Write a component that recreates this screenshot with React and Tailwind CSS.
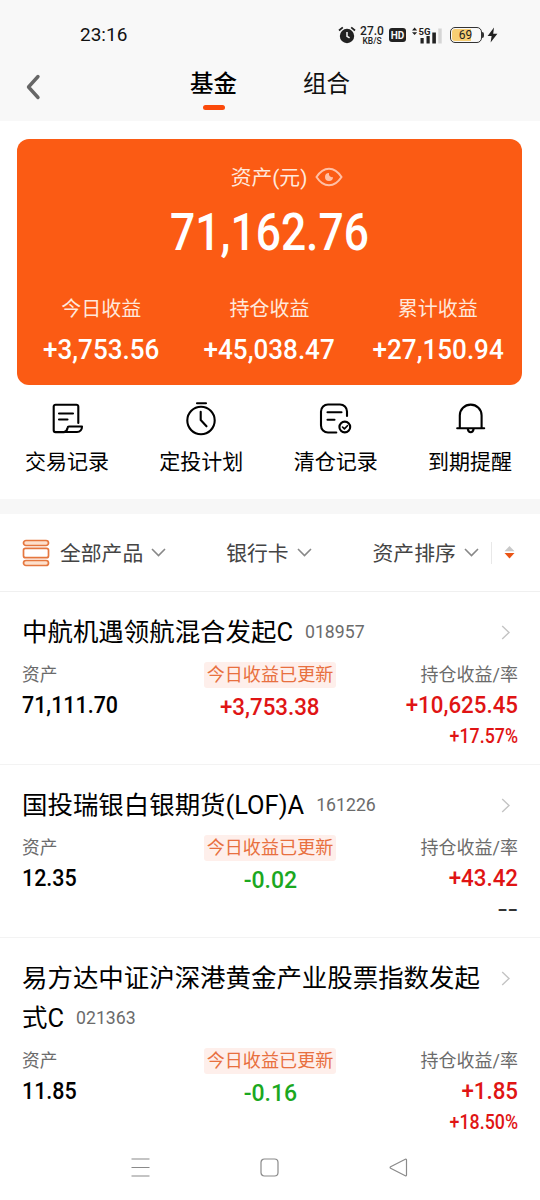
import { useState } from 'react'
import clsx from 'clsx'

const summary = [
    { label: '今日收益', value: '+3,753.56' },
    { label: '持仓收益', value: '+45,038.47' },
    { label: '累计收益', value: '+27,150.94' },
]

const funds = [
    {
        name: '中航机遇领航混合发起C',
        code: '018957',
        asset: '71,111.70',
        today: '+3,753.38',
        profit: '+10,625.45',
        rate: '+17.57%',
    },
    {
        name: '国投瑞银白银期货(LOF)A',
        code: '161226',
        asset: '12.35',
        today: '-0.02',
        profit: '+43.42',
        rate: '--',
    },
    {
        name: '易方达中证沪深港黄金产业股票指数发起式C',
        code: '021363',
        asset: '11.85',
        today: '-0.16',
        profit: '+1.85',
        rate: '+18.50%',
    },
]

const tone = (v) => {
    if (v === '--') return 'text-[#333]'
    return v[0] === '-' ? 'text-[#1ba81f]' : 'text-[#e01414]'
}

function Chevron(){
    return(
        <svg className="ml-2" width="15" height="9" viewBox="0 0 15 9" fill="none" stroke="#888" strokeWidth="1.6">
            <path d="M1 1l6.5 6.5L14 1" />
        </svg>
    )
}

function StatusBar(){
    return(
        <div className="flex h-[60px] items-center justify-between pl-[80px] pr-[42px] pt-[10px]">
            <div className="text-[19px] leading-6 text-[#111]">23:16</div>
            <div className="flex items-center text-[#222]">
                <svg width="18" height="18" viewBox="0 0 18 18">
                    <circle cx="9" cy="10" r="7.2" fill="#222" />
                    <path d="M1 4.5L4.8 1.4M17 4.5l-3.8-3.1" stroke="#222" strokeWidth="1.8" />
                    <path d="M9 6v4.3l2.6 1.6" stroke="#f8f8f8" strokeWidth="1.5" fill="none" />
                </svg>
                <div className="ml-[4px] flex w-[24px] flex-col items-center font-medium">
                    <span className="text-[12px] leading-[12px]">27.0</span>
                    <span className="text-[8.5px] leading-[9px]">KB/S</span>
                </div>
                <div className="ml-[5px] flex h-[14px] w-[17px] items-center justify-center rounded-[3px] bg-[#222] text-[10px] font-bold text-[#f8f8f8]">HD</div>
                <div className="relative ml-[6px] h-[17px] w-[30px]">
                    <svg width="30" height="17" viewBox="0 0 30 17" fill="#222">
                        <path d="M0 3.4L2.6 .6l2.6 2.8zM0 5.2h5.2L2.6 8z" />
                        <rect x="8.5" y="11" width="3.2" height="5.5" />
                        <rect x="14.5" y="9" width="3.2" height="7.5" />
                        <rect x="20.3" y="5.5" width="3.6" height="11" />
                        <rect x="26.3" y="1.5" width="3.4" height="15" fill="#d5d5d5" />
                    </svg>
                    <span className="absolute left-[6.5px] top-0 text-[9.5px] font-bold leading-[9px]">5G</span>
                </div>
                <div className="ml-[8px] flex h-[16px] w-[32px] rounded-[5px] border-[1.5px] border-[#333] p-[1px]">
                    <div className="w-[19px] rounded-l-[3px] bg-[#f7ce73]" />
                    <span className="-ml-[19px] w-[27px] text-center text-[12px] leading-[12px]">69</span>
                </div>
                <div className="h-[6px] w-[2px] rounded-r bg-[#333]" />
                <svg className="ml-[3px]" width="11" height="16" viewBox="0 0 11 16" fill="#222">
                    <path d="M7 .5L.6 9h4L3.6 15.5 10.4 6.8H6.2z" />
                </svg>
            </div>
        </div>
    )
}

function ActionIcon({ name }){
    const props = { width: 34, height: 34, viewBox: '0 0 34 34', fill: 'none', stroke: '#000', strokeWidth: 2.1, strokeLinecap: 'round', strokeLinejoin: 'round' }

    if (name === 'record') return(
        <svg {...props}>
            <path d="M28.3 21V4.5a1.8 1.8 0 0 0-1.8-1.8H5.5a1.8 1.8 0 0 0-1.8 1.8v23.8a1.8 1.8 0 0 0 1.8 1.8h8.8M9 11.5h14M9 17.5h8.5" />
            <path d="M14 30c2.3-.3 3.2-2 3.6-4.3.1-.9.6-1.2 1.4-1.2h13c0 3-1.8 5.5-5 5.5z" />
        </svg>
    )
    if (name === 'plan') return(
        <svg {...props}>
            <circle cx="17" cy="18.5" r="13.7" />
            <path d="M13 1.3h9M16.7 9.8V18l5.8 6.3" />
        </svg>
    )
    if (name === 'clear') return(
        <svg {...props}>
            <path d="M28 14V9.5a7 7 0 0 0-7-7h-12a7 7 0 0 0-7 7v14a7 7 0 0 0 7 7h8.3M8.5 10.3h14M8.5 17.8h7" />
            <circle cx="25.8" cy="25" r="5.4" />
            <path d="M23.5 25l1.9 1.9 3-3.2" strokeWidth="1.6" />
        </svg>
    )
    return(
        <svg {...props}>
            <path d="M6.8 26.2V13.5a10.9 10.9 0 0 1 21.8 0v12.7M4.2 26.3h27M14.8 27c.4 2.5 1.6 3.2 2.9 3.2s2.5-.7 2.9-3.2" />
        </svg>
    )
}

function FundRow({ fund }){
    return(
        <div className="border-b border-[#f3f3f3] px-[22px] pb-[12px] pt-[21px]">
            <div className="flex items-start justify-between">
                <div className="w-[464px] text-[25.45px] leading-[39.6px] text-black">
                    {fund.name}
                    <span className="ml-[12px] inline-block -translate-y-[3px] text-[17.7px] leading-[20px] text-[#6b6b6b]">{fund.code}</span>
                </div>
                <svg className="mr-[7px] mt-[12px]" width="10" height="15" viewBox="0 0 10 15" fill="none" stroke="#c4c4c4" strokeWidth="1.4">
                    <path d="M1.2 1l6.8 6.5L1.2 14" />
                </svg>
            </div>
            <div className="mt-[9.4px] grid grid-cols-[150px_1fr_150px] text-[18px]">
                <div>
                    <div className="h-[26px] text-[17.7px] leading-[26px] text-[#6b6b6b]">资产</div>
                    <div className="mt-[2px] h-[30px] origin-left scale-x-[0.875] text-[24.5px] font-medium leading-[30px] text-black">{fund.asset}</div>
                </div>
                <div className="flex flex-col items-center">
                    <div className="h-[26px] whitespace-nowrap rounded-[3px] bg-[#feefeb] px-[3px] text-[18.1px] leading-[26px] text-[#e8703f]">今日收益已更新</div>
                    <div className={clsx('mt-[4px] h-[30px] text-[24.5px] font-medium leading-[30px]', fund.today[0] === '-' ? 'scale-x-[0.94]' : 'scale-x-[0.91]', tone(fund.today))}>{fund.today}</div>
                </div>
                <div className="text-right">
                    <div className="h-[26px] leading-[26px] text-[#6b6b6b]">持仓收益/率</div>
                    <div className={clsx('mt-[2px] h-[30px] origin-right scale-x-[0.91] text-[24.5px] font-medium leading-[30px]', tone(fund.profit))}>{fund.profit}</div>
                    <div className={clsx('mt-[1px] h-[31px] origin-right text-[20px] font-medium leading-[31px]', fund.rate === '--' ? 'scale-x-150' : 'scale-x-[0.89]', tone(fund.rate))}>{fund.rate}</div>
                </div>
            </div>
        </div>
    )
}

export default function App(){
    const [tab, setTab] = useState('基金')

    return(
        <div className="flex h-[1200px] w-[540px] flex-col overflow-hidden bg-white font-[Roboto,'Noto_Sans_CJK_SC',sans-serif]">
            <header className="h-[121px] shrink-0 bg-[#f8f8f8]">
                <StatusBar />
                <div className="flex pt-[5px]">
                    <svg className="ml-[25px] mt-[8px]" width="18" height="28" viewBox="0 0 18 28" fill="none" stroke="#666" strokeWidth="3.4" strokeLinecap="round" strokeLinejoin="round">
                        <path d="M13 3.5L3.5 14 13 24.5" />
                    </svg>
                    <div className="ml-[147px] mt-[1px] flex gap-[66px] text-[23.5px] leading-[36px] text-[#111]">
                        {['基金', '组合'].map(t => (
                            <button key={t} className={clsx('flex flex-col items-center', t === tab && 'font-medium text-black')} onClick={() => setTab(t)}>
                                {t}
                                {t === tab && <span className="mt-[3px] h-[5px] w-[22px] rounded-full bg-[#fb4a0b]" />}
                            </button>
                        ))}
                    </div>
                </div>
            </header>

            <section className="ml-[17px] mr-[18px] mt-[18px] h-[246px] shrink-0 rounded-[12px] bg-[#fb5b14] pt-[24px] text-white">
                <div className="flex items-center justify-center pl-[35px]">
                    <span className="text-[20.8px] leading-[30px] text-[#ffe8dc]">资产(元)</span>
                    <svg className="-mt-[2px] ml-[8px]" width="28" height="20" viewBox="0 0 28 20" fill="none" stroke="#ffc0a6" strokeWidth="2">
                        <path d="M1.5 10C5 4.5 9.5 1.7 14 1.7S23 4.5 26.5 10C23 15.5 18.5 18.3 14 18.3S5 15.5 1.5 10z" />
                        <path d="M14 6a4 4 0 1 0 4 4c-2.4.8-4.6-1.2-4-4z" fill="#ffc0a6" stroke="none" />
                    </svg>
                </div>
                <div className="mt-[10px] scale-x-[0.87] text-center text-[51px] font-medium leading-[60px]">71,162.76</div>
                <div className="mt-[31px] grid grid-cols-3">
                    {summary.map(s => (
                        <div key={s.label} className="text-center">
                            <div className="text-[20px] leading-[30px] text-[#ffe8dc]">{s.label}</div>
                            <div className="mt-[10px] scale-x-[0.93] text-[28px] font-medium leading-[32px]">{s.value}</div>
                        </div>
                    ))}
                </div>
            </section>

            <nav className="flex h-[114px] shrink-0 justify-between pl-[25px] pr-[28px] pt-[17px] text-[21px] leading-[32px] text-black">
                {[['record', '交易记录'], ['plan', '定投计划'], ['clear', '清仓记录'], ['bell', '到期提醒']].map(([icon, label]) => (
                    <div key={icon} className="flex flex-col items-center">
                        <ActionIcon name={icon} />
                        <span className="mt-[10px]">{label}</span>
                    </div>
                ))}
            </nav>

            <div className="h-[15px] shrink-0 bg-[#f7f7f7]" />

            <div className="flex h-[78px] shrink-0 items-center border-b border-[#f0f0f0] pl-[22px] text-[20.8px] text-[#444]">
                <svg width="28" height="28" viewBox="0 0 28 28" fill="#fde0cd" stroke="#e5773f" strokeWidth="1.7">
                    <rect x="1.5" y="1.5" width="25" height="5" rx="2.5" />
                    <rect x="1.5" y="9.3" width="25" height="9.4" rx="2" fill="#fff" />
                    <rect x="1.5" y="21.5" width="25" height="5" rx="2.5" />
                </svg>
                <div className="ml-[10px] flex items-center"><span className="pt-[4px]">全部产品</span><Chevron /></div>
                <div className="ml-[60px] flex items-center"><span className="pt-[4px]">银行卡</span><Chevron /></div>
                <div className="ml-[61px] flex items-center"><span className="pt-[4px]">资产排序</span><Chevron /></div>
                <div className="ml-[12px] h-[22px] w-px bg-[#e8e8e8]" />
                <svg className="ml-[12px]" width="11" height="13" viewBox="0 0 11 13">
                    <path d="M5.5 0l5 5.3H.5z" fill="#c8c8c8" />
                    <path d="M5.5 12.5L.5 7h10z" fill="#ea5415" />
                </svg>
            </div>

            <main className="h-[543px] shrink-0 overflow-hidden">
                {funds.map(f => <FundRow key={f.code} fund={f} />)}
            </main>

            <footer className="flex h-[65px] items-center justify-center gap-[110px] pr-[2px]">
                <svg width="19" height="19" viewBox="0 0 19 19" fill="none" stroke="#8a8a8a" strokeWidth="1.2">
                    <path d="M.5 1h18M.5 9.5h18M.5 18h18" />
                </svg>
                <svg width="19" height="19" viewBox="0 0 19 19" fill="none" stroke="#8a8a8a" strokeWidth="1.2">
                    <rect x="1" y="1" width="17" height="17" rx="3.5" />
                </svg>
                <svg width="19" height="19" viewBox="0 0 19 19" fill="none" stroke="#8a8a8a" strokeWidth="1.2" strokeLinejoin="round">
                    <path d="M16.3 1.2L1.6 8.7a.9.9 0 0 0 0 1.6l14.7 7.5c.7.3 1.2 0 1.2-.7V1.9c0-.7-.5-1-1.2-.7z" />
                </svg>
            </footer>
        </div>
    )
}
